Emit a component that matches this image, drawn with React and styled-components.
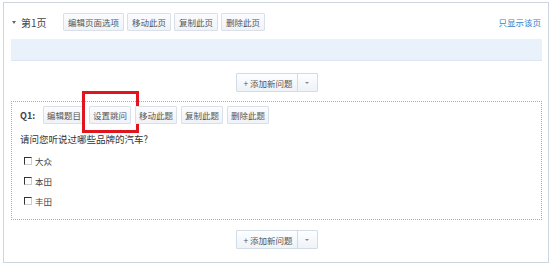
import React from "react";
import styled, { createGlobalStyle } from "styled-components";

const GlobalStyle = createGlobalStyle`
  html, body {
    margin: 0;
    padding: 0;
    background: #fff;
  }
  body {
    font-family: "Noto Sans CJK SC", "Noto Sans", sans-serif;
    color: #333;
  }
`;

const options = ["大众", "本田", "丰田"];

const App = () => {
  return (
    <>
      <GlobalStyle />
      <Panel>
        <Header>
          <Title>
            <Caret />
            第1页
          </Title>
          <ButtonGroup>
            <ToolButton>编辑页面选项</ToolButton>
            <ToolButton>移动此页</ToolButton>
            <ToolButton>复制此页</ToolButton>
            <ToolButton>删除此页</ToolButton>
          </ButtonGroup>
          <PageLink href="#">只显示该页</PageLink>
        </Header>

        <InfoBar />

        <AddRow>
          <AddButton>
            <AddMain>+ 添加新问题</AddMain>
            <AddToggle>
              <SmallCaret />
            </AddToggle>
          </AddButton>
        </AddRow>

        <QuestionBox>
          <QuestionToolbar>
            <QLabel>Q1:</QLabel>
            <QButtons>
              <ToolButton $compact>编辑题目</ToolButton>
              <ToolButton $compact>
                设置跳问
                <Highlight />
              </ToolButton>
              <ToolButton $compact>移动此题</ToolButton>
              <ToolButton $compact>复制此题</ToolButton>
              <ToolButton $compact>删除此题</ToolButton>
            </QButtons>
          </QuestionToolbar>

          <QuestionText>请问您听说过哪些品牌的汽车?</QuestionText>

          <OptionList>
            {options.map((o) => (
              <Option key={o}>
                <Check />
                {o}
              </Option>
            ))}
          </OptionList>
        </QuestionBox>

        <AddRow $bottom>
          <AddButton>
            <AddMain>+ 添加新问题</AddMain>
            <AddToggle>
              <SmallCaret />
            </AddToggle>
          </AddButton>
        </AddRow>
      </Panel>
    </>
  );
};

export default App;

const Panel = styled.div`
  box-sizing: border-box;
  margin: 2px 0 0 3px;
  width: 546px;
  height: 261px;
  border: 1px solid #cdd6e0;
  padding: 0 6px 0 7px;
  display: flex;
  flex-direction: column;
`;

const Header = styled.div`
  display: flex;
  align-items: center;
  height: 18px;
  margin-top: 10px;
  margin-bottom: 8px;
`;

const Title = styled.div`
  display: flex;
  align-items: center;
  width: 51px;
  font-size: 10px;
  color: #444;
  padding-left: 1px;
`;

const Caret = styled.span`
  width: 0;
  height: 0;
  border-left: 2.5px solid transparent;
  border-right: 2.5px solid transparent;
  border-top: 3px solid #666;
  margin-right: 5px;
  margin-top: 1px;
`;

const ButtonGroup = styled.div`
  display: flex;
  gap: 3px;
  flex: 1;
`;

const ToolButton = styled.div`
  position: relative;
  box-sizing: border-box;
  height: 18px;
  padding: 0 ${({ $compact }) => ($compact ? "3px" : "4px")};
  display: flex;
  align-items: center;
  font-size: 8.5px;
  color: #555;
  white-space: nowrap;
  border: 1px solid #d9e0e8;
  border-radius: 1px;
  background: linear-gradient(#fbfcfe, #eff3f8);
`;

const PageLink = styled.a`
  font-size: 8.5px;
  color: #3c80c6;
  text-decoration: none;
  margin-right: 1px;
`;

const InfoBar = styled.div`
  height: 22px;
  background: #e9f1fa;
  border-bottom: 1px solid #dde7f1;
  box-sizing: border-box;
`;

const AddRow = styled.div`
  display: flex;
  justify-content: center;
  margin-top: ${({ $bottom }) => ($bottom ? "10px" : "12px")};
  margin-bottom: ${({ $bottom }) => ($bottom ? "0" : "9px")};
`;

const AddButton = styled.div`
  box-sizing: border-box;
  display: flex;
  height: 19px;
  border: 1px solid #d3dce6;
  border-radius: 1px;
  background: linear-gradient(#fdfeff, #eef3f8);
`;

const AddMain = styled.div`
  display: flex;
  align-items: center;
  width: 61px;
  padding-left: 7px;
  box-sizing: border-box;
  font-size: 8.5px;
  color: #555;
  border-right: 1px solid #d3dce6;
`;

const AddToggle = styled.div`
  width: 19px;
  display: flex;
  align-items: center;
  justify-content: center;
`;

const SmallCaret = styled.span`
  width: 0;
  height: 0;
  border-left: 2px solid transparent;
  border-right: 2px solid transparent;
  border-top: 2.5px solid #888;
`;

const QuestionBox = styled.div`
  box-sizing: border-box;
  height: 119px;
  border: 1px dotted #9db1c6;
  padding: 4px 8px 0 8px;
  display: flex;
  flex-direction: column;
`;

const QuestionToolbar = styled.div`
  display: flex;
  align-items: center;
  height: 18px;
`;

const QLabel = styled.div`
  width: 23px;
  font-size: 9px;
  font-weight: bold;
  color: #444;
`;

const QButtons = styled.div`
  display: flex;
  gap: 4px;
`;

const Highlight = styled.span`
  position: absolute;
  top: -16px;
  left: -8px;
  right: -9px;
  bottom: -10px;
  border: 3px solid #e0151d;
  pointer-events: none;
`;

const QuestionText = styled.div`
  margin-top: 7px;
  line-height: 16px;
  font-size: 9.5px;
  color: #333;
`;

const OptionList = styled.div`
  margin-top: 4px;
  display: flex;
  flex-direction: column;
`;

const Option = styled.div`
  display: flex;
  align-items: center;
  height: 20px;
  padding-left: 4px;
  font-size: 8.5px;
  color: #444;
`;

const Check = styled.span`
  box-sizing: border-box;
  width: 8px;
  height: 8px;
  margin-right: 3px;
  border-top: 1.5px solid #333;
  border-left: 1.5px solid #333;
  border-right: 1px solid #ccc;
  border-bottom: 1px solid #ccc;
`;
